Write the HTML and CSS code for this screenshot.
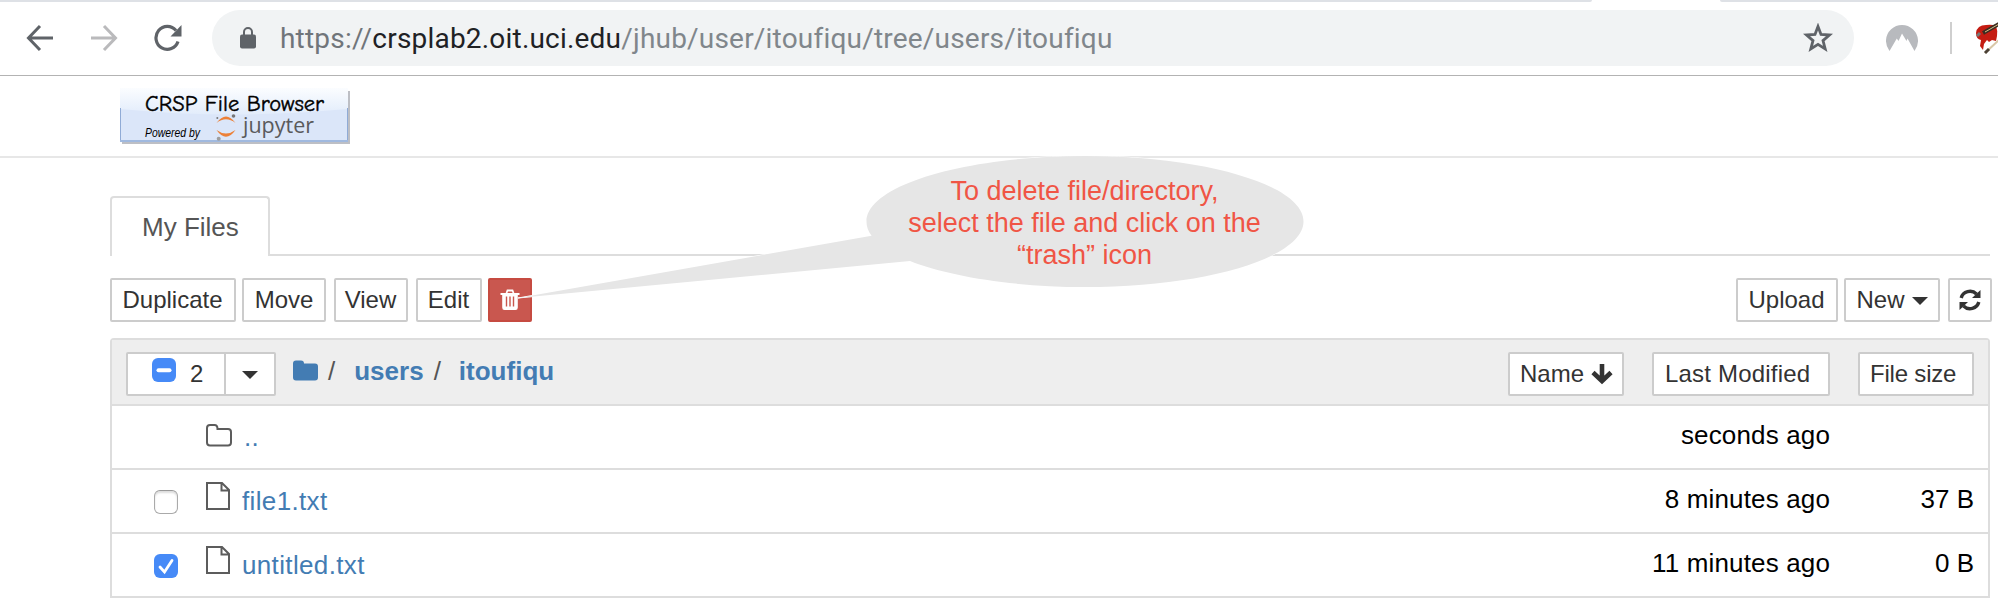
FILE: index.html
```html
<!DOCTYPE html>
<html lang="en">
<head>
<meta charset="utf-8">
<title>CRSP File Browser</title>
<link rel="stylesheet" href="styles.css">
</head>
<body>
<div class="tabstrip"><span class="strip-left"></span><span class="strip-right"></span></div>
<div class="toolbar">
  <div class="nav">
    <svg width="28" height="28" viewBox="0 0 28 28" fill="none" stroke="#5f6368" stroke-width="3"><path d="M27 14H3M14 2L2.500 14L14 26"/></svg>
    <svg width="28" height="28" viewBox="0 0 28 28" fill="none" stroke="#bababc" stroke-width="3"><path d="M1 14H25M14 2L25.500 14L14 26"/></svg>
    <svg width="28" height="28" viewBox="0 0 28 28"><path d="M24 17.500A11.300 11.500 0 1 1 22 6.500" fill="none" stroke="#5f6368" stroke-width="3.200"/><path d="M27.500 1V12.500H16.500Z" fill="#5f6368"/></svg>
  </div>
  <div class="omnibox">
    <svg class="lock" width="16" height="22" viewBox="0 0 16 22"><rect y="7.500" width="16" height="14" rx="2" fill="#5f6368"/><path d="M4 8V5a4 4 0 0 1 8 0V8" fill="none" stroke="#5f6368" stroke-width="2"/></svg>
    <div class="url"><span class="scheme">https://</span><span class="host">crsplab2.oit.uci.edu</span><span class="path">/jhub/user/itoufiqu/tree/users/itoufiqu</span></div>
    <svg class="star" width="30" height="30" viewBox="0 0 30 30"><path d="M15 3.500L18 11.500L26.500 12L20 17.600L22.200 26L15 21.400L7.800 26L10 17.600L3.500 12L12 11.500Z" fill="none" stroke="#5f6368" stroke-width="2.800"/></svg>
  </div>
  <svg class="ext" width="32" height="28" viewBox="0 0 32 28"><path d="M3.500 27A16 16 0 1 1 28.500 27L21.500 14.500L20.500 17L16 9.500L12.500 17L10.800 14.500Z" fill="#b8babe"/></svg>
  <span class="divider"></span>
  <svg class="profile" width="22" height="34" viewBox="0 0 22 34"><path d="M0 12Q1 4 10 4Q16 3 20 5Q22 10 21 15L20 20L16 19L13 21L11 19L8 23L7 29L4 25L5 19Q0 18 0 12Z" fill="#c41c12"/><path d="M1 15L4 12" stroke="#777" stroke-width="3"/><path d="M7 12L23 3" stroke="#3b2d22" stroke-width="4"/><path d="M9 11L23 3" stroke="#d5bd88" stroke-width="1"/><path d="M9 32L23 19" stroke="#d8c8a8" stroke-width="2"/><path d="M9 32L13 28" stroke="#4c4136" stroke-width="3"/></svg>
</div>
<header class="header">
  <svg class="logo" width="232" height="58" viewBox="0 0 232 58">
    <defs>
      <linearGradient id="gloss" x1="0" y1="0" x2="0" y2="1"><stop offset="0" stop-color="#fbfdff"/><stop offset="1" stop-color="#e2ecfb"/></linearGradient>
    </defs>
    <rect x="2" y="3" width="228" height="53" fill="#bdbfc5"/>
    <rect x="0" y="0" width="228" height="54" fill="#dbe6f9"/>
    <path d="M0 0H228V21Q114 32 0 21Z" fill="url(#gloss)"/>
    <path d="M.5 20V53M227.500 20V53" stroke="#90abd6"/>
    <path d="M0 53H228" stroke="#a0b9df" stroke-width="2"/>
    <text class="logo-title" x="25" y="22.500" textLength="179" lengthAdjust="spacingAndGlyphs">CRSP File Browser</text>
    <text class="logo-powered" x="25" y="49" textLength="55" lengthAdjust="spacingAndGlyphs">Powered by</text>
    <path d="M96.500 35Q106 22 115.500 35Q106 27.500 96.500 35Z" fill="#ec8038"/>
    <path d="M96.500 42Q106 55.500 115.500 42Q106 49 96.500 42Z" fill="#ec8038"/>
    <circle cx="97.300" cy="30" r="1" fill="#767677"/><circle cx="113.500" cy="28" r="1.800" fill="#767677"/><circle cx="98.700" cy="50.800" r="2" fill="#9e9e9e"/>
    <text class="logo-jupyter" x="123" y="44.500" textLength="71" lengthAdjust="spacingAndGlyphs">jupyter</text>
  </svg>
</header>
<main class="page">
  <div class="tabs"><div class="tab">My Files</div><div class="tabs-rest"></div></div>
  <div class="actions">
    <button class="btn w-dup">Duplicate</button>
    <button class="btn w-move">Move</button>
    <button class="btn w-view">View</button>
    <button class="btn w-edit">Edit</button>
    <button class="btn danger" aria-label="Delete"><svg width="20" height="22" viewBox="0 0 20 22"><path d="M6.500 4L7.500 1.500H12.500L13.500 4" fill="none" stroke="#fff" stroke-width="1.800"/><path d="M.5 4H19.500V6H17.800V18.500Q17.800 21 15.500 21H4.500Q2.200 21 2.200 18.500V6H.5Z" fill="#fff"/><path d="M6.500 7.500V17.500M10 7.500V17.500M13.500 7.500V17.500" stroke="#c9574f" stroke-width="1.400"/></svg></button>
    <span class="spacer"></span>
    <button class="btn w-upload">Upload</button>
    <button class="btn w-new">New<i class="caret"></i></button>
    <button class="btn w-refresh" aria-label="Refresh"><svg width="22" height="22" viewBox="0 0 22 22"><path d="M2.200 9A9 8.500 0 0 1 17.500 5M19.800 13A9 8.500 0 0 1 4.500 17" fill="none" stroke="#333" stroke-width="3.400"/><path d="M21.500 1V9H13ZM.5 21V13H9Z" fill="#333"/></svg></button>
  </div>
  <section class="list">
    <div class="list-head">
      <div class="select-group">
        <div class="select-all"><span class="check on"><svg width="24" height="24" viewBox="0 0 24 24"><path d="M6.500 12.200H17.500" stroke="#fff" stroke-width="4" stroke-linecap="round"/></svg></span><span class="count">2</span></div>
        <div class="select-menu"><i class="caret"></i></div>
      </div>
      <div class="crumbs">
        <svg width="25" height="21" viewBox="0 0 25 21"><path d="M0 3.500Q0 .5 3 .5H8Q11 .5 11 3.500H22Q25 3.500 25 6.500V17.500Q25 20.500 22 20.500H3Q0 20.500 0 17.500Z" fill="#437cb3"/></svg>
        <span class="slash s1">/</span><a class="c1">users</a><span class="slash s2">/</span><a class="c2">itoufiqu</a>
      </div>
      <span class="spacer"></span>
      <button class="btn sort w-name">Name<svg width="22" height="22" viewBox="0 0 22 22"><path d="M11 1V18M2 9.500L11 18L20 9.500" fill="none" stroke="#333" stroke-width="4.600"/></svg></button>
      <button class="btn sort w-mod">Last Modified</button>
      <button class="btn sort w-size">File size</button>
    </div>
    <div class="row">
      <span class="cell-check"></span>
      <span class="cell-icon"><svg width="26" height="24" viewBox="0 0 26 24"><path d="M1 4Q1 1 4 1H8.500Q11.500 1 11.500 5H22Q25 5 25 8V18.500Q25 21.500 22 21.500H4Q1 21.500 1 18.500Z" fill="none" stroke="#5c5c5c" stroke-width="2"/></svg></span>
      <a class="name up">..</a><span class="when">seconds ago</span><span class="size"></span>
    </div>
    <div class="row">
      <span class="cell-check"><span class="check"></span></span>
      <span class="cell-icon file"><svg width="24" height="28" viewBox="0 0 24 28"><path d="M1 1H16L23 8V27H1ZM15.500 1V8.500H23" fill="none" stroke="#5c5c5c" stroke-width="2"/></svg></span>
      <a class="name">file1.txt</a><span class="when">8 minutes ago</span><span class="size">37 B</span>
    </div>
    <div class="row">
      <span class="cell-check"><span class="check on"><svg width="24" height="24" viewBox="0 0 24 24"><path d="M6 13L10.500 18L18 6.500" fill="none" stroke="#fff" stroke-width="2.800" stroke-linecap="round"/></svg></span></span>
      <span class="cell-icon file"><svg width="24" height="28" viewBox="0 0 24 28"><path d="M1 1H16L23 8V27H1ZM15.500 1V8.500H23" fill="none" stroke="#5c5c5c" stroke-width="2"/></svg></span>
      <a class="name">untitled.txt</a><span class="when">11 minutes ago</span><span class="size">0 B</span>
    </div>
  </section>
</main>
<div class="callout">
  <svg width="786" height="132" viewBox="518 156 786 132"><path class="bubble" d="M518 298L871.600 235.700C868 231 866.500 226.500 866.500 221.500C866.500 185.300 964.300 156 1085 156S1303.500 185.300 1303.500 221.500S1205.700 287 1085 287C1012 287 948 276 910 261Z"/></svg>
  <p>To delete file/directory,<br>select the file and click on the<br>“trash” icon</p>
</div>
</body>
</html>
```
FILE: styles.css
```css
* { box-sizing: border-box; }
body { margin: 0; width: 1998px; height: 598px; overflow: hidden; background: #fff; font: 26px "Liberation Sans", Arial, sans-serif; color: #000; position: relative; }
svg { display: block; flex: none; }
.spacer { flex: 1; }

.tabstrip { display: flex; justify-content: space-between; height: 2px; }
.tabstrip span { background: #dee1e6; height: 2px; }
.strip-left { width: 1592px; border-bottom-right-radius: 4px; }
.strip-right { width: 278px; border-bottom-left-radius: 4px; }
.toolbar { height: 74px; display: flex; align-items: center; padding-bottom: 1px; border-bottom: 1px solid #b3b3b3; }
.nav { flex: none; display: flex; gap: 36px; padding-left: 26px; width: 212px; }
.omnibox { flex: none; width: 1642px; height: 56px; border-radius: 28px; background: #f1f3f4; display: flex; align-items: center; padding: 0 21px 0 28px; }
.url { margin-left: 24px; flex: 1; font: 28px Roboto, sans-serif; letter-spacing: 0.2px; white-space: nowrap; color: #80868b; }
.scheme { color: #70757a; }
.host { color: #202124; }
.ext { margin-left: 32px; }
.divider { flex: none; width: 2px; height: 32px; background: #cfcfcf; margin: 0 24px 0 32px; }

.header { height: 82px; border-bottom: 2px solid #e7e7e7; padding: 12px 0 0 120px; }
.logo-title { font: 22px "Comic Sans MS", "Comic Neue", "Comic Relief", cursive; stroke: #000; stroke-width: 0.4px; }
.logo-powered { font: italic 12px "Liberation Sans", sans-serif; }
.logo-jupyter { font: 22px "Open Sans", sans-serif; fill: #5a5a5c; }

.page { padding: 38px 8px 0 110px; }
.tabs { display: flex; height: 60px; }
.tab { width: 160px; border: 2px solid #ddd; border-bottom: 0; border-radius: 4px 4px 0 0; color: #555; line-height: 58px; padding-left: 30px; }
.tabs-rest { flex: 1; border-bottom: 2px solid #ddd; }

.actions { display: flex; padding-top: 22px; margin-right: -2px; height: 82px; }
.btn { flex: none; height: 44px; margin: 0; padding: 0; border: 2px solid #ccc; border-radius: 2px; background: #fff; color: #333; font: 24px "Liberation Sans", Arial, sans-serif; display: flex; align-items: center; justify-content: center; white-space: nowrap; }
.caret { border: 8px solid transparent; border-top-color: #333; border-bottom: 0; display: block; }
.actions .caret { margin-top: 2px; }
.w-dup { width: 126px; margin-right: 6px; padding-right: 1px; }
.w-move { width: 84px; margin-right: 8px; }
.w-view { width: 74px; margin-right: 8px; padding-right: 1px; }
.w-edit { width: 66px; margin-right: 6px; padding-right: 1px; }
.danger { width: 44px; background: #c9574f; border-color: #c64b41; }
.w-upload { width: 102px; margin-right: 6px; padding-right: 1px; }
.w-new { width: 96px; gap: 7px; margin-right: 8px; }
.w-refresh { width: 44px; }

.list { border: 2px solid #ddd; border-radius: 4px 4px 0 0; }
.list-head { height: 64px; background: #eee; display: flex; align-items: flex-start; padding: 12px 14px 0; }
.select-group { width: 150px; height: 44px; display: flex; border: 2px solid #ccc; border-radius: 2px; background: #fff; }
.select-all { width: 98px; border-right: 2px solid #ccc; padding: 4px 0 0 24px; display: flex; color: #333; }
.count { font-size: 24px; line-height: 30px; padding: 1px 0 0 14px; }
.select-menu { flex: 1; display: flex; align-items: center; justify-content: center; padding-top: 2px; }
.check { display: block; width: 24px; height: 24px; border-radius: 6px; border: 1px solid #aaa; border-top-color: #999; box-shadow: inset 0 2px 2px #ddd; flex: none; }
.check.on { background: #468af7; border: 0; box-shadow: none; }
.crumbs { display: flex; align-items: center; height: 30px; margin: 4px 0 0 17px; font-weight: bold; color: #437cb3; }
.crumbs svg { margin-top: -2px; }
.slash { color: #555; font-weight: normal; }
.s1 { margin-left: 10px; }
.c1 { margin-left: 19px; }
.s2 { margin-left: 10px; }
.c2 { margin-left: 18px; }
.sort { justify-content: flex-start; padding-left: 10px; }
.w-name { width: 116px; gap: 7px; margin-right: 28px; }
.w-mod { width: 178px; padding-left: 11px; letter-spacing: 0.2px; margin-right: 28px; }
.w-size { width: 116px; letter-spacing: -0.2px; }

.row { height: 64px; border-top: 2px solid #ddd; display: flex; padding-right: 14px; line-height: 30px; }
.cell-check { width: 94px; padding: 20px 0 0 42px; }
.cell-icon { width: 36px; padding-top: 18px; }
.cell-icon.file { padding-top: 12px; }
.name { flex: 1; padding-top: 16px; letter-spacing: 0.35px; color: #437cb3; }
.name.up { padding-left: 2px; }
.when { padding-top: 14px; letter-spacing: 0.15px; }
.size { width: 144px; padding-top: 14px; text-align: right; }

.callout { position: absolute; left: 518px; top: 156px; width: 786px; height: 132px; }
.callout svg { position: absolute; overflow: visible; left: 0; top: 0; }
.bubble { fill: #e6e6e6; stroke: #fff; stroke-width: 1; paint-order: stroke; }
.callout p { position: absolute; margin: 0; left: 348px; width: 437px; top: 19px; text-align: center; font-size: 27px; line-height: 32px; color: #f05545; white-space: nowrap; }
```
